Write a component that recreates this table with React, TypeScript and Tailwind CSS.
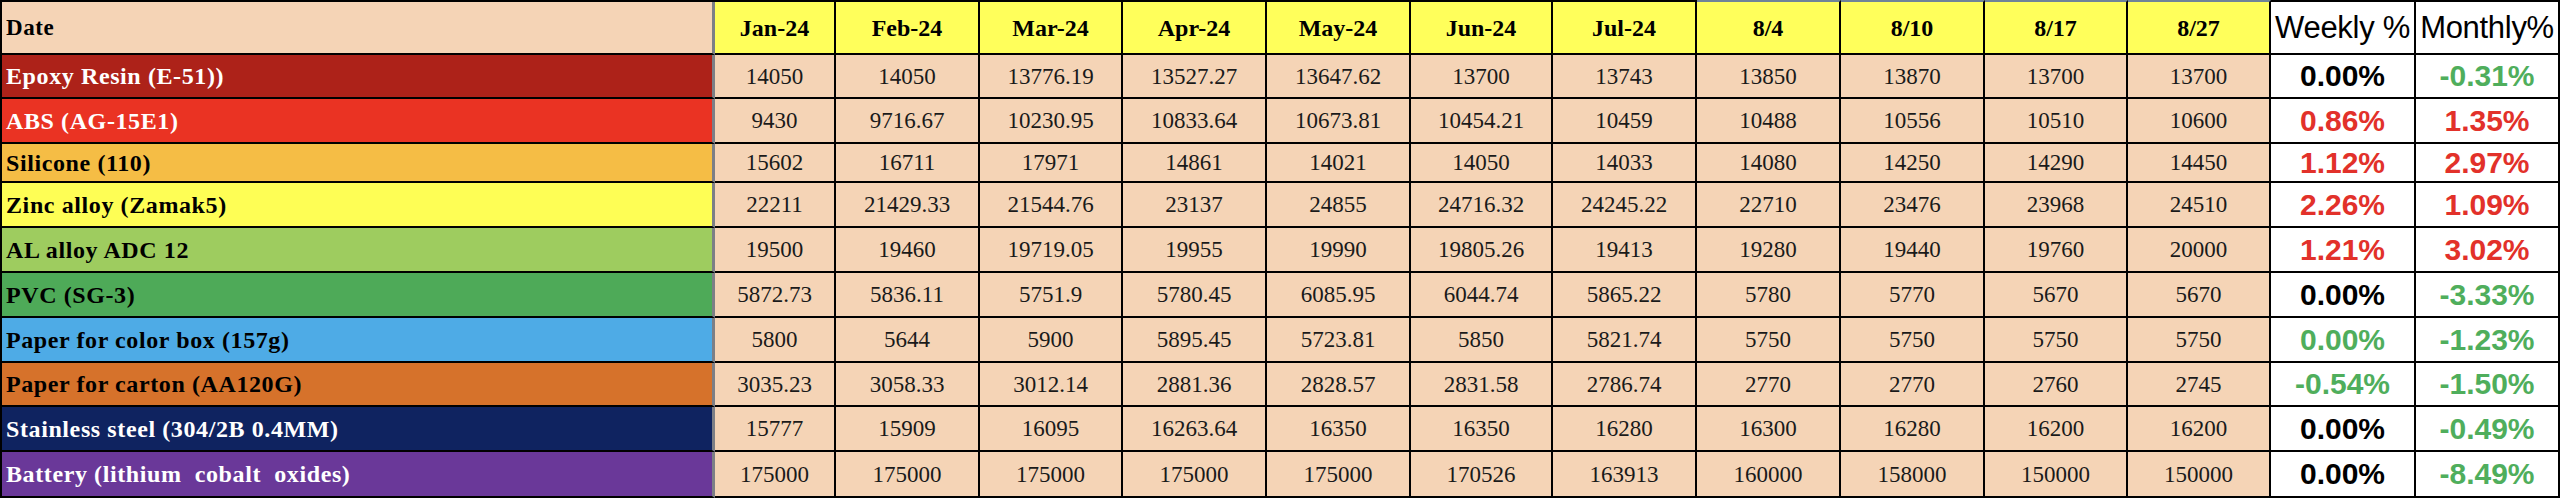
const months = ['Jan-24', 'Feb-24', 'Mar-24', 'Apr-24', 'May-24', 'Jun-24', 'Jul-24', '8/4', '8/10', '8/17', '8/27']

type Tone = 'up' | 'down' | 'flat'

const rows: {
  name: string
  bg: string
  fg: string
  values: string[]
  weekly: [string, Tone]
  monthly: [string, Tone]
}[] = [
  { name: 'Epoxy Resin (E-51))', bg: 'bg-[#ad2219]', fg: 'text-white', values: ['14050', '14050', '13776.19', '13527.27', '13647.62', '13700', '13743', '13850', '13870', '13700', '13700'], weekly: ['0.00%', 'flat'], monthly: ['-0.31%', 'down'] },
  { name: 'ABS (AG-15E1)', bg: 'bg-[#ea3323]', fg: 'text-white', values: ['9430', '9716.67', '10230.95', '10833.64', '10673.81', '10454.21', '10459', '10488', '10556', '10510', '10600'], weekly: ['0.86%', 'up'], monthly: ['1.35%', 'up'] },
  { name: 'Silicone (110)', bg: 'bg-[#f5bd45]', fg: 'text-black', values: ['15602', '16711', '17971', '14861', '14021', '14050', '14033', '14080', '14250', '14290', '14450'], weekly: ['1.12%', 'up'], monthly: ['2.97%', 'up'] },
  { name: 'Zinc alloy (Zamak5)', bg: 'bg-[#fefe55]', fg: 'text-black', values: ['22211', '21429.33', '21544.76', '23137', '24855', '24716.32', '24245.22', '22710', '23476', '23968', '24510'], weekly: ['2.26%', 'up'], monthly: ['1.09%', 'up'] },
  { name: 'AL alloy ADC 12', bg: 'bg-[#9ecc5f]', fg: 'text-black', values: ['19500', '19460', '19719.05', '19955', '19990', '19805.26', '19413', '19280', '19440', '19760', '20000'], weekly: ['1.21%', 'up'], monthly: ['3.02%', 'up'] },
  { name: 'PVC (SG-3)', bg: 'bg-[#4eaa58]', fg: 'text-black', values: ['5872.73', '5836.11', '5751.9', '5780.45', '6085.95', '6044.74', '5865.22', '5780', '5770', '5670', '5670'], weekly: ['0.00%', 'flat'], monthly: ['-3.33%', 'down'] },
  { name: 'Paper for color box (157g)', bg: 'bg-[#4eabe6]', fg: 'text-black', values: ['5800', '5644', '5900', '5895.45', '5723.81', '5850', '5821.74', '5750', '5750', '5750', '5750'], weekly: ['0.00%', 'down'], monthly: ['-1.23%', 'down'] },
  { name: 'Paper for carton (AA120G)', bg: 'bg-[#d6722b]', fg: 'text-black', values: ['3035.23', '3058.33', '3012.14', '2881.36', '2828.57', '2831.58', '2786.74', '2770', '2770', '2760', '2745'], weekly: ['-0.54%', 'down'], monthly: ['-1.50%', 'down'] },
  { name: 'Stainless steel (304/2B 0.4MM)', bg: 'bg-[#0f2360]', fg: 'text-white', values: ['15777', '15909', '16095', '16263.64', '16350', '16350', '16280', '16300', '16280', '16200', '16200'], weekly: ['0.00%', 'flat'], monthly: ['-0.49%', 'down'] },
  { name: 'Battery (lithium  cobalt  oxides)', bg: 'bg-[#6a3899]', fg: 'text-white', values: ['175000', '175000', '175000', '175000', '175000', '170526', '163913', '160000', '158000', '150000', '150000'], weekly: ['0.00%', 'flat'], monthly: ['-8.49%', 'down'] },
]

const toneClass: Record<Tone, string> = {
  up: 'text-[#e2312a]',
  down: 'text-[#4fae5c]',
  flat: 'text-black',
}

const serif = "font-['Liberation_Serif',serif]"
const sans = "font-['Liberation_Sans',Arial,sans-serif]"

function Pct({ value, tone }: { value: string; tone: Tone }) {
  return (
    <div className={`flex items-center justify-center bg-white border-r-2 border-b-2 border-black ${sans} text-[30px] leading-none font-bold ${toneClass[tone]}`}>
      {value}
    </div>
  )
}

export default function App() {
  return (
    <div className="w-[2560px] h-[498px] bg-white overflow-hidden">
      <div className="grid grid-cols-[713px_121px_144px_143px_144px_144px_142px_144px_144px_144px_143px_143px_145px_144px] grid-rows-[53px_44px_45px_39px_45px_45px_45px_45px_44px_45px_46px] border-l-2 border-t-2 border-black">
        {/* header */}
        <div className={`flex items-center px-[4px] bg-[#f5d4b6] border-r-[3px] border-r-[#7c7f86] border-b-2 border-b-black ${serif} text-[23px] leading-none font-bold text-black tracking-[0.6px]`}>
          Date
        </div>
        {months.map((m, i) => (
          <div
            key={m}
            className={`flex items-center justify-center bg-[#ffff5b] border-r-2 border-b-2 border-black ${i >= 7 ? 'border-t-2 border-t-[#6f8399] -mt-[2px]' : ''} ${serif} text-[24px] leading-none font-bold text-black`}
          >
            {m}
          </div>
        ))}
        <div className={`flex items-center justify-center bg-white border-r-2 border-b-2 border-black ${sans} text-[31px] leading-none text-black whitespace-nowrap tracking-[-0.3px]`}>
          Weekly %
        </div>
        <div className={`flex items-center justify-center bg-white border-r-2 border-b-2 border-black ${sans} text-[31px] leading-none text-black whitespace-nowrap tracking-[-0.3px]`}>
          Monthly%
        </div>

        {/* data rows */}
        {rows.map(r => (
          <div key={r.name} className="contents">
            <div className={`flex items-center px-[4px] ${r.bg} ${r.fg} border-r-[3px] border-r-[#7c7f86] border-b-2 border-b-black ${serif} text-[24px] leading-none font-bold whitespace-pre tracking-[0.6px]`}>
              {r.name}
            </div>
            {r.values.map((v, i) => (
              <div key={i} className={`flex items-center justify-center bg-[#f5d4b6] border-r-2 border-b-2 border-black ${serif} text-[23px] leading-none text-[#1a1a1a]`}>
                {v}
              </div>
            ))}
            <Pct value={r.weekly[0]} tone={r.weekly[1]} />
            <Pct value={r.monthly[0]} tone={r.monthly[1]} />
          </div>
        ))}
      </div>
    </div>
  )
}
